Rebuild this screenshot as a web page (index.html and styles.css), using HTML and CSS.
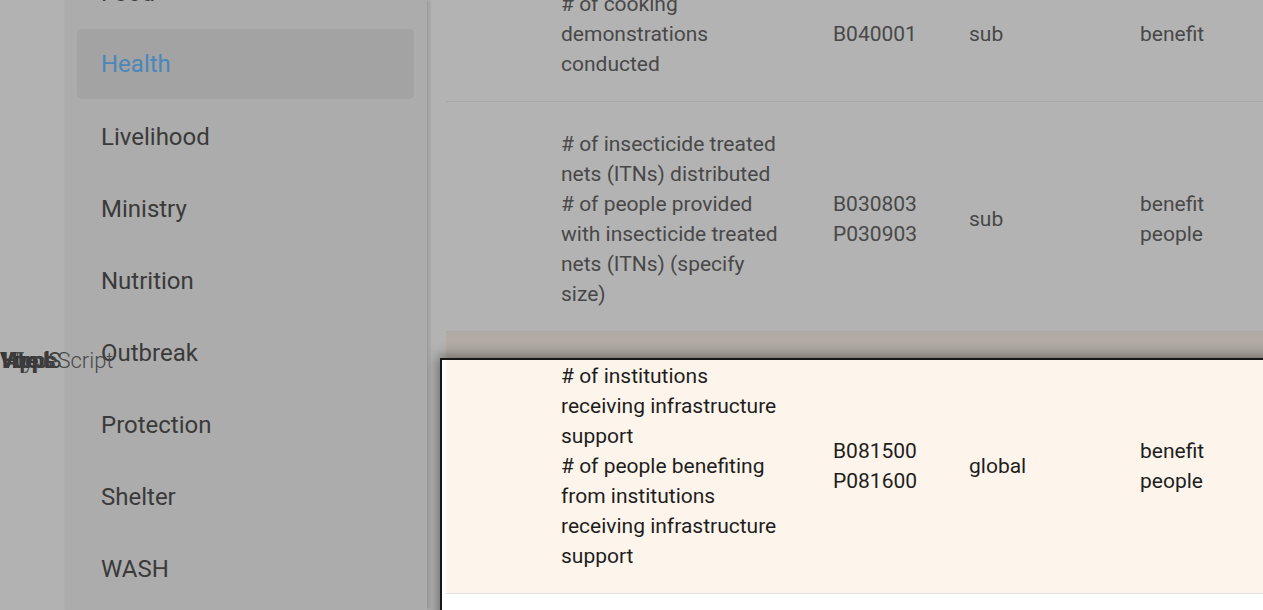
FILE: index.html
```html
<!DOCTYPE html>
<html lang="en">
<head>
<meta charset="utf-8">
<title>Indicators</title>
<link rel="stylesheet" href="styles.css">
</head>
<body>
<div class="app">
  <div class="gutter">
    <div class="stack">
      <span class="w w-ts">TypeScript</span>
      <span class="w w-b1">Vue</span>
      <span class="w w-b2">Html</span>
      <span class="w w-b3">Apps</span>
      <span class="w w-js">JS</span>
    </div>
  </div>
  <nav class="sidebar">
    <ul class="menu">
      <li class="item">Food</li>
      <li class="item active">Health</li>
      <li class="item">Livelihood</li>
      <li class="item">Ministry</li>
      <li class="item">Nutrition</li>
      <li class="item">Outbreak</li>
      <li class="item">Protection</li>
      <li class="item">Shelter</li>
      <li class="item">WASH</li>
    </ul>
  </nav>
  <main class="main">
    <div class="rows">
      <div class="row">
        <div class="c0"></div>
        <div class="c-text"><div># of cooking<br>demonstrations<br>conducted</div></div>
        <div class="c-mid">B040001</div>
        <div class="c-mid">sub</div>
        <div class="c-mid">benefit</div>
      </div>
      <div class="row">
        <div class="c0"></div>
        <div class="c-text"><div># of insecticide treated<br>nets (ITNs) distributed</div><div># of people provided<br>with insecticide treated<br>nets (ITNs) (specify<br>size)</div></div>
        <div class="c-mid">B030803<br>P030903</div>
        <div class="c-mid">sub</div>
        <div class="c-mid">benefit<br>people</div>
      </div>
      <div class="row row-hl">
        <div class="c0"></div>
        <div class="c-text"><div># of institutions<br>receiving infrastructure<br>support</div><div># of people benefiting<br>from institutions<br>receiving infrastructure<br>support</div></div>
        <div class="c-mid">B081500<br>P081600</div>
        <div class="c-mid">global</div>
        <div class="c-mid">benefit<br>people</div>
      </div>
      <div class="row-after"></div>
    </div>
    <div class="spotlight"></div>
  </main>
</div>
</body>
</html>
```

FILE: styles.css
```css
html, body {
  margin: 0;
  padding: 0;
}
body {
  background: #b3b3b3;
  font-family: Roboto, "Liberation Sans", Arial, sans-serif;
  width: 1263px;
  height: 610px;
  overflow: hidden;
}
.app {
  display: flex;
  height: 610px;
  overflow: hidden;
}
.gutter {
  width: 65px;
  flex: none;
  background: #b2b2b2;
  position: relative;
}
.stack {
  position: absolute;
  left: 0;
  top: 347px;
  width: 120px;
  height: 28px;
  z-index: 3;
}
.w {
  position: absolute;
  top: 0;
  font-size: 22px;
  line-height: 28px;
  white-space: nowrap;
}
.w-ts { left: 11px; color: #4a4a4a; font-weight: 300; }
.w-b1 { left: 0; color: #333; font-weight: 700; }
.w-b2 { left: 2px; color: #3a3a3a; font-weight: 700; }
.w-b3 { left: 5px; color: #3c3c3c; font-weight: 700; }
.w-js { left: 36px; color: #404040; }
.sidebar {
  width: 362px;
  flex: none;
  background: #acacac;
  box-shadow: 2px 0 4px rgba(0, 0, 0, 0.16);
  position: relative;
  z-index: 1;
  overflow: hidden;
}
.menu {
  list-style: none;
  margin: -42px 13px 0 12px;
  padding: 0;
}
.item {
  height: 70px;
  margin-bottom: 2px;
  padding-left: 24px;
  display: flex;
  align-items: center;
  font-size: 24px;
  color: #3a3a3a;
  border-radius: 5px;
}
.item.active {
  background: #a3a3a3;
  color: #4a87ba;
  margin-top: -1px;
  margin-bottom: 3px;
}
.main {
  flex: 1;
  position: relative;
  padding-left: 19px;
  overflow: hidden;
}
.rows {
  margin-top: -38px;
}
.row {
  display: grid;
  grid-template-columns: 115px 272px 136px 171px 1fr;
  padding: 27px 0 22px;
  border-bottom: 1px solid #a8a8a8;
  font-size: 21px;
  line-height: 30px;
  color: #484848;
  white-space: nowrap;
}
.c-mid {
  align-self: center;
}
.row-hl {
  padding-top: 29px;
  color: #1e1e1e;
  border-bottom-color: #e2e2e2;
  background: linear-gradient(to bottom, #b1aba4 0, #b1aba4 27px, #fdf5eb 27px);
}
.row-after {
  height: 120px;
  background: #ffffff;
}
.spotlight {
  position: absolute;
  left: 13px;
  top: 358px;
  width: 900px;
  height: 400px;
  border: 2px solid #161616;
  pointer-events: none;
  box-shadow: 0 0 12px 2px rgba(0, 0, 0, 0.42), inset 4px 0 0 #ffffff;
  z-index: 2;
}
```
